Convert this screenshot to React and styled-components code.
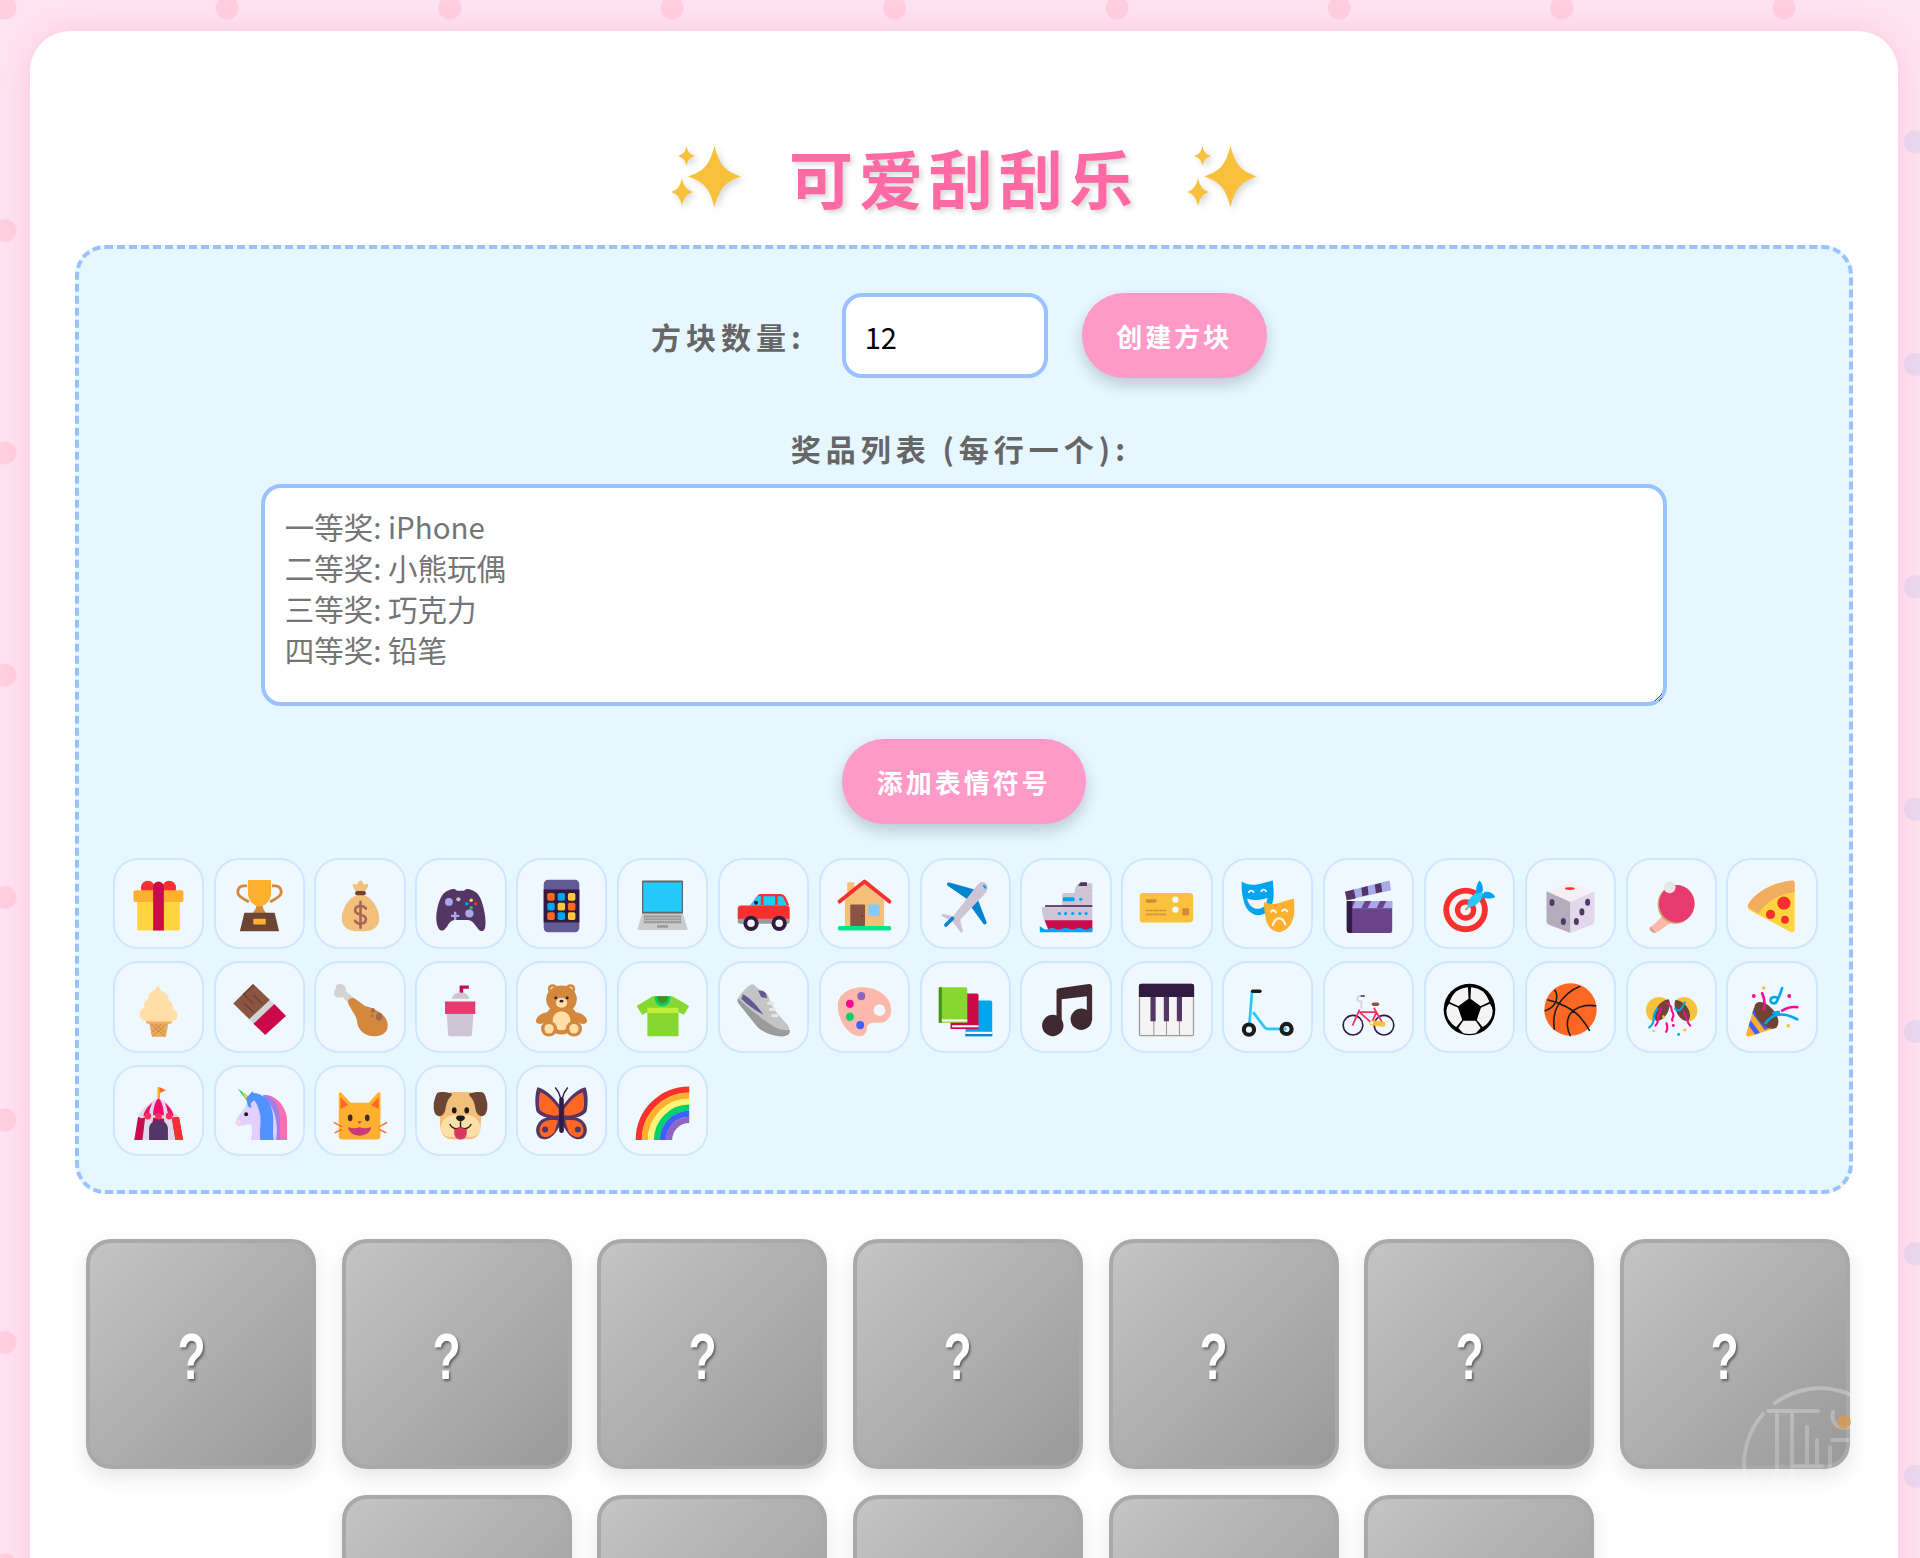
import React from 'react';
import styled, { createGlobalStyle } from 'styled-components';

const FONT = `"Comic Sans MS", cursive, "Noto Sans CJK SC", sans-serif`;

const GlobalStyle = createGlobalStyle`
    html, body {
        margin: 0;
        height: 100%;
        overflow: hidden;
    }
    body {
        padding: 31px 22px 0 30px;
        box-sizing: border-box;
        font-family: ${FONT};
        background-color: #ffe3f0;
        background-image:
            radial-gradient(circle at 25px 28px, #ffcfe0 11px, transparent 12px),
            radial-gradient(circle at 156px 162px, #e8d9f0 11px, transparent 12px);
        background-size: 222.4px 222.4px;
        background-position: -20px -20px;
    }
`;

const Container = styled.main`
    background: #fff;
    border-radius: 40px;
    padding: 107px 45px 40px;
    box-shadow: 0 0 30px rgba(255, 150, 190, 0.35);
`;

const Title = styled.h1`
    display: flex;
    justify-content: center;
    align-items: center;
    gap: 48px;
    margin: 0 0 30px;
    font-size: 64px;
    line-height: 77px;
    font-weight: 700;
    letter-spacing: 6px;
    color: #ff69a4;
    text-shadow: 3px 3px 5px rgba(0, 0, 0, 0.15);
`;

const SparkleSvg = styled.svg`
    width: 70px;
    height: 62px;
    filter: drop-shadow(3px 3px 3px rgba(0, 0, 0, 0.15));
`;

const Panel = styled.section`
    background: #e6f7ff;
    border: 4px dashed #99c2ff;
    border-radius: 30px;
    padding: 44px 31px 34px 33.7px;
`;

const CountRow = styled.div`
    display: flex;
    justify-content: center;
    align-items: center;
    margin-left: -13px;
`;

const Label = styled.label`
    font-size: 30px;
    font-weight: 700;
    letter-spacing: 5px;
    color: #666;
`;

const CountInput = styled.input`
    box-sizing: border-box;
    width: 206px;
    height: 85px;
    margin: 0 34px 0 36px;
    padding: 0 19px;
    border: 4px solid #99c2ff;
    border-radius: 20px;
    background: #fff;
    font-family: ${FONT};
    font-size: 29px;
    color: #000;
    outline: none;
`;

const PinkButton = styled.button`
    height: 85px;
    width: ${props => props.$width}px;
    padding: 0;
    border: none;
    border-radius: 42px;
    background: #ff99c8;
    color: #fff;
    font-family: ${FONT};
    font-size: 26px;
    font-weight: 700;
    letter-spacing: 3px;
    box-shadow: 0 7px 16px rgba(0, 0, 0, 0.18);
`;

const ListLabel = styled(Label)`
    display: block;
    margin: 50px 0 16px -10px;
    line-height: 40px;
    text-align: center;
`;

const PrizeArea = styled.textarea`
    display: block;
    box-sizing: border-box;
    width: 1406px;
    height: 222px;
    margin: 0 0 33px 148px;
    padding: 18px 20px;
    border: 4px solid #99c2ff;
    border-radius: 20px;
    background: #fff;
    font-family: ${FONT};
    font-size: 29.5px;
    line-height: 41px;
    outline: none;
    &::placeholder {
        color: #757575;
        opacity: 1;
    }
`;

const AddRow = styled.div`
    display: flex;
    justify-content: center;
    margin: 0 0 34px -3px;
`;

const EmojiGrid = styled.div`
    display: grid;
    grid-template-columns: repeat(17, 91.3px);
    grid-auto-rows: 91.3px;
    column-gap: 9.57px;
    row-gap: 12.2px;
`;

const EmojiCell = styled.button`
    box-sizing: border-box;
    display: flex;
    align-items: center;
    justify-content: center;
    padding: 4px 0 0;
    background: #f0f8ff;
    border: 2px solid #cfe6ff;
    border-radius: 25px;
`;

const EmojiSvg = styled.svg`
    width: 57px;
    height: 57px;
    flex: none;
`;

const BlockGrid = styled.div`
    display: flex;
    flex-wrap: wrap;
    justify-content: center;
    gap: 25.6px;
    margin: 45px 0 0 8px;
`;

const Block = styled.div`
    box-sizing: border-box;
    width: 230px;
    height: 230px;
    display: flex;
    align-items: center;
    justify-content: center;
    padding: 5px 20px 0 0;
    border: 4px solid #a9a9a9;
    border-radius: 25px;
    background: linear-gradient(135deg, #c4c4c4, #999);
    box-shadow: 0 8px 20px rgba(0, 0, 0, 0.1);
    color: #fff;
    font-family: "Liberation Sans", sans-serif;
    font-size: 64px;
    font-weight: 700;
    text-shadow: 2px 2px 3px rgba(0, 0, 0, 0.45);
`;

const QuestionMark = styled.span`
    display: inline-block;
    transform: scaleX(0.72);
`;

const Watermark = styled.svg`
    position: fixed;
    left: 1740px;
    top: 1378px;
    width: 170px;
    height: 170px;
    pointer-events: none;
`;

const star = (cx, cy, w, h) =>
    `M${cx} ${cy - h}C${cx + w * 0.18} ${cy - h * 0.38} ${cx + w * 0.38} ${cy - h * 0.18} ${cx + w} ${cy}` +
    `C${cx + w * 0.38} ${cy + h * 0.18} ${cx + w * 0.18} ${cy + h * 0.38} ${cx} ${cy + h}` +
    `C${cx - w * 0.18} ${cy + h * 0.38} ${cx - w * 0.38} ${cy + h * 0.18} ${cx - w} ${cy}` +
    `C${cx - w * 0.38} ${cy - h * 0.18} ${cx - w * 0.18} ${cy - h * 0.38} ${cx} ${cy - h}z`;

const Sparkle = () => (
    <SparkleSvg viewBox="0 0 70 62">
        <path fill="#f9c03c" d={star(43.5, 30.5, 26.5, 31)} />
        <path fill="#f9c03c" d={star(15.5, 10, 8.5, 10)} />
        <path fill="#f9c03c" d={star(11, 46, 11, 14)} />
    </SparkleSvg>
);

const appGrid = ['#ff6723', '#00a6ed', '#ffc83d', '#00a6ed', '#ffc83d', '#ff6723', '#ff6723', '#00a6ed', '#ffc83d'];

const ICONS = [
    // gift
    <>
        <circle cx="10" cy="6" r="3.9" fill="#f8312f" />
        <circle cx="22" cy="6" r="3.9" fill="#f8312f" />
        <rect x="4" y="13" width="24" height="17" rx="1" fill="#ffd53f" />
        <rect x="2" y="7.5" width="28" height="6.5" rx="1" fill="#ffb02e" />
        <path d="M13 5.5a3 3 0 0 1 6 0V30h-6z" fill="#ca0b4a" />
    </>,
    // trophy
    <>
        <path d="M9 5H7a3.3 3.3 0 0 0-2 5.8c1.400 1.200 3 2 5 3.200M23 5h2a3.300 3.300 0 0 1 2 5.800c-1.400 1.200-3 2-5 3.200" fill="none" stroke="#d3883e" strokeWidth="1.600" />
        <path d="M14.500 14h3c0 3 1 5.500 3.500 7H11c2.500-1.500 3.500-4 3.500-7z" fill="#d3883e" />
        <path d="M9.500 2.500a.8.8 0 0 1 .8-.8h11.400a.8.8 0 0 1 .8.800V9c0 4-3 7.500-6.500 7.500S9.500 13 9.500 9z" fill="#ffb02e" />
        <path d="M7.500 20h17l2.500 10.500H5z" fill="#6d4534" />
        <rect x="12.500" y="23.500" width="7" height="3.200" rx=".4" fill="#ffb02e" />
    </>,
    // money bag
    <>
        <path d="M16 10c-6 0-10.500 8-10.500 13 0 5.500 3.500 7.500 10.500 7.500s10.500-2 10.500-7.500C26.500 18 22 10 16 10z" fill="#f3c07b" />
        <path d="M13.500 8C12.300 6.800 11.300 5 11.800 3.800c1 0 1.700.6 2.200.6.500-1 1.200-2.400 2-2.400s1.500 1.400 2 2.400c.5 0 1.200-.6 2.200-.6.500 1.200-.5 3-1.700 4.200z" fill="#f3c07b" />
        <rect x="13" y="7.800" width="6" height="2.400" rx="1" fill="#6d4534" />
        <path d="M19 17.800c-.5-1-1.500-1.500-3-1.500-1.900 0-3 1-3 2.400s1.300 2.100 3 2.500 3 1.100 3 2.500-1.100 2.400-3 2.400c-1.500 0-2.500-.5-3-1.500M16 14v14.500" fill="none" stroke="#a56953" strokeWidth="1.500" strokeLinecap="round" />
    </>,
    // game controller
    <>
        <path d="M9.500 7.500c2-1 3.500-1 4.500.2h4c1-1.200 2.500-1.200 4.500-.2 3 1 5 3.500 6.500 10s1.500 12.300-.5 12.800-3-2-5.200-4.500c-1-1-2-1.600-3.300-1.600h-7c-1.300 0-2.300.6-3.300 1.600C8 28.300 7 30.500 5 30S1.500 24 3 17.500 6.500 8.500 9.500 7.500z" fill="#533566" />
        <circle cx="9.500" cy="14" r="2.200" fill="#a8a8ea" />
        <circle cx="21" cy="20.500" r="2.300" fill="#a8a8ea" />
        <circle cx="14.800" cy="12.500" r="1.200" fill="#c4c4c4" />
        <path d="M13 19.500v4.600M10.700 21.800h4.600" stroke="#a8a8ea" strokeWidth="1.300" />
        <circle cx="19.500" cy="15" r="1" fill="#00a6ed" />
        <circle cx="22" cy="13" r="1" fill="#fcd53f" />
        <circle cx="24.500" cy="15" r="1" fill="#f8312f" />
        <circle cx="22" cy="17.300" r="1" fill="#00d26a" />
    </>,
    // mobile phone
    <>
        <rect x="6" y="1.500" width="20" height="29.500" rx="2.500" fill="#635994" />
        <rect x="6" y="7" width="20" height="18.500" fill="#321b41" />
        {appGrid.map((fill, i) => (
            <rect key={i} x={8 + (i % 3) * 5.800} y={9 + Math.floor(i / 3) * 5.400} width="4.200" height="4.400" rx="1" fill={fill} />
        ))}
    </>,
    // laptop
    <>
        <rect x="4.500" y="2" width="23" height="19" rx=".6" fill="#636363" />
        <rect x="5.200" y="3" width="21.600" height="16.500" fill="#26c9fc" />
        <path d="M4.500 20.500h23l2.700 9.300H1.800z" fill="#cccccc" />
        <rect x="5.500" y="21.500" width="21" height="4.500" fill="#9b9b9b" />
        <path d="M6 23h20M6 24.500h20" stroke="#e0e0e0" strokeWidth=".5" strokeDasharray="1 .5" />
        <rect x="13" y="27" width="6" height="1.500" fill="#9b9b9b" />
    </>,
    // car
    <>
        <path d="M8.500 16l4-5.500c.6-.8 1.500-1 2.500-1h10.500c1.500 0 2.700 1 3.300 2.500l1.700 4z" fill="#f8312f" />
        <path d="M8.500 15.800l4.200-5.200h1.800v5.200z" fill="#26c9fc" />
        <rect x="16" y="10.800" width="6.500" height="6" rx=".4" fill="#26c9fc" />
        <path d="M24 10.800h2c1.300 0 2 2.600 3 5.200h-5z" fill="#26c9fc" />
        <circle cx="11.800" cy="14.500" r="1.100" fill="#321b41" />
        <rect x="1.500" y="16" width="29.200" height="9" rx="2" fill="#f8312f" />
        <rect x="1.500" y="23.500" width="29.200" height="2.800" rx="1" fill="#9b9b9b" />
        <circle cx="9" cy="26" r="4.300" fill="#321b41" />
        <circle cx="9" cy="26" r="2.100" fill="#f4f4f4" />
        <circle cx="24.800" cy="26" r="4.300" fill="#321b41" />
        <circle cx="24.800" cy="26" r="2.100" fill="#f4f4f4" />
    </>,
    // house
    <>
        <rect x="6.300" y="3" width="4" height="10" fill="#f3c07b" />
        <path d="M5 13L16 3.500 27 13v15H5z" fill="#f3c07b" />
        <path d="M2 13.800L16 2.500l14 11.300" fill="none" stroke="#f8312f" strokeWidth="2.200" strokeLinecap="round" strokeLinejoin="round" />
        <rect x="8" y="15.500" width="8.300" height="12" rx=".5" fill="#8c5543" />
        <circle cx="14.700" cy="22" r=".4" fill="#321b41" />
        <rect x="18.200" y="15.500" width="6.300" height="6.300" rx=".6" fill="#83cbff" />
        <rect x="1" y="27.500" width="30" height="2.500" rx="1" fill="#00e58f" />
    </>,
    // airplane
    <>
        <path d="M6 4.900c-.9-.8-.2-2.200 1-1.800L21 7l-4 5.500zM22.500 11.500l5.300 13.700c.4 1.100-1.100 2-1.800 1L19 16.500z" fill="#0084ce" />
        <path d="M24 3.200c2.300-1.400 5.400 1.100 4.200 3.900-1 2.200-2.800 4-4.500 5.700L13 24l1.400 6c.3 1.200-1 1.600-1.500.6L9 25.200l-6-3c-1-.5-.5-1.700.5-1.400l5.600 1.200L19.500 8.500c1.400-1.700 2.800-4 4.500-5.300z" fill="#cdc4d6" />
        <path d="M5 27l3.700-3.700" stroke="#0084ce" strokeWidth="2" strokeLinecap="round" />
        <ellipse cx="26.800" cy="5.500" rx=".7" ry="1.300" transform="rotate(-40 26.800 5.500)" fill="#00a6ed" />
    </>,
    // ship
    <>
        <path d="M20.500 9c0-2 1-5.500 3-5.500h7V9z" fill="#cdc4d6" />
        <path d="M23.500 3.300c.5-.4 1-.3 1.500-.3h2.500v2h-4.800z" fill="#533566" />
        <rect x="13.500" y="9" width="17" height="8" rx="1" fill="#cdc4d6" />
        <rect x="14" y="11.300" width="6.500" height="2.300" rx=".5" fill="#00a6ed" />
        <circle cx="24" cy="12.500" r=".9" fill="#00a6ed" />
        <path d="M2 17h28.500v13H6C4 27 2.500 22 2 17z" fill="#cdc4d6" />
        <rect x="4" y="15.800" width="26.500" height="1" fill="#533566" />
        {[12, 15.500, 19.500, 23.500, 27].map(cx => <circle key={cx} cx={cx} cy="20.500" r=".9" fill="#00a6ed" />)}
        <path d="M3.800 24.300h26.700V30H6z" fill="#ca0b4a" />
        <path d="M1 27.500V31h29.500v-2.500c-1.500 0-2 1-3.500 1s-2.500-1-4-1-2 1-3.500 1-2.500-1-4-1-2.500 1-4 1-2-1-3.500-1-2 1-3.500 1c-.8 0-1.500-1-3-1.500z" fill="#00a6ed" />
    </>,
    // ticket
    <>
        <path d="M2.500 9h26.500a2 2 0 0 1 2 2v12.500a2 2 0 0 1-2 2H2.500a1.500 1.500 0 0 1-1.500-1.500V10.500A1.500 1.500 0 0 1 2.500 9z" fill="#f9c23c" />
        <circle cx="21" cy="12.700" r="1.800" fill="#f0f8ff" />
        <circle cx="21" cy="18.300" r="1.800" fill="#f0f8ff" />
        <rect x="4.400" y="12.500" width="6" height="1.900" rx=".6" fill="#d3883e" />
        <path d="M4.400 18.800h11.500M4.400 21h11.500" stroke="#d3883e" strokeWidth=".9" strokeDasharray="1 .3" />
        <rect x="24.900" y="17.500" width="3.800" height="4.100" rx=".5" fill="#d3883e" />
    </>,
    // performing arts
    <>
        <path d="M1.500 2.500c2.500 1.500 5 2.200 8.500 1.700 3-.5 6-1.500 9-2.200.5 5 .8 9.500-.2 12.500-1 4-4 6.800-8 7-4-.3-7-3.500-8-7.500-1-3.500-1.500-7-1.300-11.500z" fill="#00a6ed" />
        <path d="M5.500 8.500c.6-1.200 2-1.200 2.700 0M12.500 8c.7-1.200 2-1.200 2.700 0" fill="none" stroke="#f4f4f4" strokeWidth="1" strokeLinecap="round" />
        <path d="M4.500 12c1 4 3.500 6 6.500 5.800 2.800-.2 4.500-2.300 5-6-3.500 1.200-7.500 1.500-11.500.2z" fill="#f4f4f4" />
        <path d="M14 14c2.500 1.200 6 1.500 8 .8 2.500-.8 5-1.800 8.800-2.600.4 4.500.5 9-.7 12-1.200 3.500-4 6.500-7.500 6.800-3.800-.3-6.500-3-7.500-7-.6-3.200-1-6.500-1.100-10z" fill="#ffb02e" />
        <path d="M18 19.500c.7-1 2-1 2.700.2M24.300 19c.7-1 2-1 2.700.2M19 27c.7-2.500 2.300-3.800 3.500-3.800s2.800 1.200 3.500 3.500" fill="none" stroke="#f4f4f4" strokeWidth="1.200" strokeLinecap="round" />
    </>,
    // clapper board
    <>
        <path d="M3.800 13.500h25.500V30a1.500 1.500 0 0 1-1.500 1.500H5.500a1.700 1.700 0 0 1-1.700-1.700z" fill="#6b438b" />
        <path d="M3.800 13.500h3v18H5.500a1.700 1.700 0 0 1-1.700-1.700z" fill="#321b41" />
        <path d="M8.500 13.500h20.800V17.500H6.800z" fill="#a8a8ea" />
        <path d="M12 17.500l2-4h3.500l-2 4zM20.500 17.500l2-4H26l-2 4z" fill="#6b438b" />
        <path d="M2.800 8.300L27.800 2l.9 5.500L3.800 13z" fill="#a8a8ea" />
        <path d="M2.800 8.300l5-1.300 1 5-5 1zM12 6l3.500-.9L16 10l-3.500.8zM19.500 4.200l3.500-.9.7 5-3.500.8z" fill="#533566" />
    </>,
    // direct hit
    <>
        <circle cx="13.800" cy="18.500" r="12.500" fill="#f8312f" />
        <circle cx="13.800" cy="18.500" r="9.200" fill="#f4f4f4" />
        <circle cx="13.800" cy="18.500" r="6" fill="#f8312f" />
        <circle cx="13.800" cy="18.500" r="3" fill="#f4f4f4" />
        <path d="M13.800 18.500l3-3" stroke="#9b9b9b" strokeWidth="1" />
        <path d="M15 16.500c-.5-2 .5-4 2.500-6l4-3.500 3 3-3 4c-2 2-4.500 3.200-6.500 2.500z" fill="#26c9fc" />
        <path d="M20 9.500c-.7-2.500-.2-5 1.500-7.500 1.800 1.500 2.200 4 2 6zM22.500 11.500c2.500.7 5.500.8 8-.2-1-2.300-3.500-3.300-6-3z" fill="#00a6ed" />
    </>,
    // game die
    <>
        <path d="M16 3l13.500 5L16 14 2.500 8z" fill="#f4f0f4" />
        <ellipse cx="15.600" cy="6.500" rx="2.800" ry=".8" fill="#f8312f" />
        <path d="M2.500 8L16 14v17.500L4.200 27c-1-.4-1.700-1.200-1.700-2.500z" fill="#b4acbc" />
        <path d="M29.500 8L16 14v17.500L27.800 27c1-.4 1.700-1.200 1.700-2.500z" fill="#e1d8ec" />
        <ellipse cx="5.600" cy="14.300" rx="1.400" ry="2" fill="#533566" />
        <ellipse cx="12" cy="25" rx="1.400" ry="2" fill="#533566" />
        <ellipse cx="25.600" cy="14.200" rx="1.400" ry="2" fill="#533566" />
        <ellipse cx="22.400" cy="19.600" rx="1.400" ry="2" fill="#533566" />
        <ellipse cx="19.300" cy="25" rx="1.400" ry="2" fill="#533566" />
    </>,
    // ping pong
    <>
        <path d="M12 21l4.500 4-8.500 6-3.500-3z" fill="#fbb8ab" />
        <path d="M4.200 27.600l3.400 3.400c-.8.600-1.700.5-2.500 0-.8-.6-1.300-1.300-1.500-1.900z" fill="#e39d89" />
        <ellipse cx="18.200" cy="15.500" rx="10" ry="10.800" fill="#d3a06a" />
        <ellipse cx="19" cy="15" rx="10" ry="10.500" fill="#e73b6f" />
        <circle cx="15" cy="5.800" r="3.300" fill="#e6e6e6" />
    </>,
    // pizza
    <>
        <path d="M27 2c1 0 1.500 1 1.500 2v25.500c0 1.300-1.500 2-2.500 1.200L3 18.500c-1-.5-1-2-.5-3C7 8 17 3 27 2z" fill="#ffd53f" />
        <path d="M27 2c1 0 1.500 1 1.500 2v4.500C20 9.500 13 13.500 8 20.500L3 17.500c-1-.5-1-1.600-.5-2.500C7 8 17 3 27 2z" fill="#f3ad61" />
        <circle cx="22.400" cy="14.700" r="3.700" fill="#f8312f" />
        <circle cx="14.900" cy="21" r="2.600" fill="#f8312f" />
        <circle cx="23" cy="24" r="2.200" fill="#f8312f" />
    </>,
    // ice cream
    <>
        <path d="M10.700 23h11l-1.600 8.300h-7.800z" fill="#e9a95e" />
        <path d="M11.500 24l8 7M20.500 24l-8 7M14 24l6 5M18 24l-6 5" stroke="#c9853c" strokeWidth=".5" />
        <rect x="9" y="21" width="14.500" height="3" rx="1" fill="#f3ad61" />
        <path d="M16 2.500c.8 1.500.7 2.800 3 3.800 2 1 3 2.800 2.500 4.400 2 1 3.200 3 2.600 5 2 1 3.200 2.800 2.400 5-.7 1.700-3 2.300-5 2H10c-2 0-4-1-4.500-3s.5-4 2.500-5c-.5-2 .5-4 2.500-5-.5-2 1-4 3-4.500 1-.5 1-1.700 2.500-2.700z" fill="#ffdea7" />
    </>,
    // chocolate
    <>
        <path d="M12.400 1.600l9.500 9-11.600 10.900L1.300 12.600z" fill="#8c5543" />
        <path d="M12.300 7.700l5.500 5.200M7 12.300l5.700 5.300M7.300 7.700l5.300 5M12.500 2.500L6.800 7.800" stroke="#6d4534" strokeWidth=".8" fill="none" />
        <path d="M21.900 10.600l2.400 2.300L12.600 24l-2.300-2.500z" fill="#d3d3d3" />
        <path d="M24.300 12.900l6.600 6.700-11.700 10.700-6.600-6.300z" fill="#ca0b4a" />
    </>,
    // poultry leg
    <>
        <path d="M3.500 1.800c2-.5 4 .5 4.300 2.500.2 1 0 1.500.5 2L13 10l-3 3.500-3.500-4c-.8-.5-1.500-.3-2.500-.2C2 9.500.8 8 1.200 6c.2-1 .6-1.500 1-2-.2-1 .3-2 1.300-2.200z" fill="#d3d3d3" />
        <path d="M9.100 11c.5-1.500 2.500-2 3.900-1l5.500 4c6 1.500 12.800 5 12.800 11 0 4-3.300 6-7.300 6-5.500 0-9.500-3-10-8.500-.3-3-2.500-5-4-8-.7-1.200-1.200-2.400-.9-3.500z" fill="#d3883e" />
        <ellipse cx="23" cy="16.500" rx="1" ry="1.400" fill="#a56953" />
        <ellipse cx="26.500" cy="20" rx="1.800" ry="2.200" fill="#a56953" />
        <circle cx="22.500" cy="19.500" r=".7" fill="#a56953" />
    </>,
    // cup with straw
    <>
        <path d="M15.500 7V2.500h5.200v1.800h-3.200V7z" fill="#ca0b4a" />
        <path d="M11 10.500c0-2 2-4 5-4s5 2 5 4z" fill="#cdc4d6" />
        <rect x="7.300" y="10" width="17" height="2.200" rx=".5" fill="#f4f4f4" />
        <rect x="7.300" y="11.500" width="17" height="7" fill="#e73b6f" />
        <path d="M8.300 18.500h15L22.400 30c0 .6-.5 1-1 1H10a1 1 0 0 1-1-1z" fill="#cdc4d6" />
    </>,
    // teddy bear
    <>
        <circle cx="11" cy="4.500" r="2.700" fill="#d3883e" />
        <circle cx="21" cy="4.500" r="2.700" fill="#d3883e" />
        <circle cx="11" cy="4.500" r="1.300" fill="#ffdea7" />
        <circle cx="21" cy="4.500" r="1.300" fill="#ffdea7" />
        <ellipse cx="16" cy="21.500" rx="9" ry="8.500" fill="#d3883e" />
        <ellipse cx="6" cy="20.800" rx="4.800" ry="2.600" transform="rotate(-30 6 20.800)" fill="#d3883e" />
        <ellipse cx="26" cy="20.800" rx="4.800" ry="2.600" transform="rotate(30 26 20.800)" fill="#d3883e" />
        <ellipse cx="16" cy="10.300" rx="8.600" ry="7.800" fill="#d3883e" />
        <ellipse cx="16" cy="22.300" rx="5" ry="5.300" fill="#ffdea7" />
        <ellipse cx="9" cy="26.800" rx="4.500" ry="4.300" fill="#d3883e" />
        <ellipse cx="23" cy="26.800" rx="4.500" ry="4.300" fill="#d3883e" />
        <ellipse cx="9" cy="26.800" rx="2.600" ry="2.700" fill="#ffdea7" />
        <ellipse cx="23" cy="26.800" rx="2.600" ry="2.700" fill="#ffdea7" />
        <ellipse cx="16" cy="12.200" rx="3.200" ry="2.800" fill="#ffdea7" />
        <circle cx="12.800" cy="9.500" r=".8" fill="#321b41" />
        <circle cx="19.200" cy="9.500" r=".8" fill="#321b41" />
        <ellipse cx="16" cy="11.300" rx="1.100" ry=".8" fill="#321b41" />
    </>,
    // t-shirt
    <>
        <path d="M10.500 8.500h11l9.500 5.500-3 5-3-1.500V31H7.500V17.500L4.500 19l-3-5z" fill="#86d72f" />
        <rect x="7.500" y="15" width="17.400" height="3" fill="#c3ef3c" />
        <path d="M11.500 8.500c0 3.500 2 5.700 4.500 5.700s4.500-2.200 4.500-5.700z" fill="#00d26a" />
        <path d="M13 8.500c0 2.500 1.300 4 3 4s3-1.500 3-4z" fill="#44911b" />
    </>,
    // sneaker
    <>
        <path d="M1.800 9.500c-.8 1-.6 2 0 2.800l9.500 12c3 4 8.500 6.500 14.500 6.800 3 .2 5.500-1.200 5-3.400z" fill="#9b9b9b" />
        <path d="M9 2c1-.5 2 0 2.500 1l3 2.500c1 .5 2 1 3.500 1.500 1 2 1.500 4 3 7 1 2 4 6 8 10 1 1 1.500 2.300 1.400 3.500-3 .5-7-.5-11-3.500C14 20.500 6 14 1.800 10c.7-2 3.700-6 7.200-8z" fill="#c4c4c4" />
        <path d="M4.500 7.500c3 1.500 7 5 11.500 11.500-4-2-8.500-5-12.500-9z" fill="#635994" />
        <path d="M13 5.500c1.500-.5 3.200 0 4.200 1.200l.8 3-3.300-.7z" fill="#635994" />
        <rect x="18" y="11.500" width="4" height="1.900" rx=".9" fill="#e6e6e6" />
        <rect x="19" y="15" width="4" height="1.900" rx=".9" fill="#e6e6e6" />
        <rect x="20.300" y="18.500" width="4" height="1.900" rx=".9" fill="#e6e6e6" />
    </>,
    // palette
    <>
        <path d="M15 3.500c8 0 16 5 16 13 0 4-3 7-6 7-3 0-5-.5-7 1-1 1-.5 2.500-1 4s-2 2.500-3.500 2.500C7 31 1 22 1 14 1 7 8 3.500 15 3.500z" fill="#fbb8ab" />
        <circle cx="24.400" cy="16.400" r="3.300" fill="#f0f8ff" />
        <ellipse cx="14.200" cy="8.500" rx="2.200" ry="2.300" fill="#8d65c5" />
        <ellipse cx="7.800" cy="12.800" rx="2.200" ry="2.300" fill="#f70a8d" />
        <ellipse cx="7.800" cy="20.100" rx="2.200" ry="2.300" fill="#00d26a" />
        <ellipse cx="13.600" cy="24.800" rx="2.200" ry="2.300" fill="#3f5fff" />
    </>,
    // books
    <>
        <path d="M16 12a1 1 0 0 1 1-1h13a1 1 0 0 1 1 1v19H16z" fill="#00a6ed" />
        <rect x="16" y="28.500" width="15" height="1.300" fill="#f4f4f4" />
        <rect x="16" y="29.800" width="15" height="1.200" fill="#0084ce" />
        <path d="M7.600 8a1 1 0 0 1 1-1h13.700a1 1 0 0 1 1 1v19H7.600z" fill="#ca0b4a" />
        <rect x="8.500" y="24.800" width="14.800" height="1.200" fill="#f4f4f4" />
        <path d="M1 4.500a1 1 0 0 1 1-1h14a1 1 0 0 1 1 1v19H1z" fill="#86d72f" />
        <rect x="1" y="3.500" width="1.700" height="20" fill="#44911b" />
        <rect x="2.700" y="21.500" width="14.300" height="1.300" fill="#f4f4f4" />
    </>,
    // music notes
    <>
        <path d="M10.400 5.500c0-.8.600-1.400 1.400-1.500L28.500 1.700c1-.1 1.900.6 1.900 1.600V22h-3V8.500L13.300 10.300V25h-2.900z" fill="#402a32" />
        <circle cx="8.300" cy="25" r="6" fill="#402a32" />
        <circle cx="24.300" cy="21.500" r="6" fill="#402a32" />
    </>,
    // piano
    <>
        <path d="M.5 3a1.400 1.400 0 0 1 1.400-1.400h28.200A1.400 1.400 0 0 1 31.500 3v27a1 1 0 0 1-1 1h-29a1 1 0 0 1-1-1z" fill="#9b9b9b" />
        <rect x="1.200" y="8.900" width="29.600" height="21.400" fill="#f4f4f4" />
        <path d="M.5 3a1.400 1.400 0 0 1 1.400-1.400h28.200A1.400 1.400 0 0 1 31.500 3v6H.5z" fill="#321b41" />
        <path d="M8.900 20v10.500M16 20v10.500M23.300 20v10.500" stroke="#9b9b9b" strokeWidth=".6" />
        <rect x="7" y="8.900" width="2.900" height="13.700" fill="#533566" />
        <rect x="14.500" y="8.900" width="2.900" height="13.700" fill="#533566" />
        <rect x="21.800" y="8.900" width="2.900" height="13.700" fill="#533566" />
    </>,
    // scooter
    <>
        <path d="M7.300 6l-1.700 21M7.900 17.500l6.500 8.500c.6.700 1.200.9 2 .9h10" fill="none" stroke="#26c9fc" strokeWidth="1.500" />
        <rect x="6.700" y="4.800" width="6" height="1.900" rx=".9" fill="#1c1c1c" />
        <circle cx="5.600" cy="27.300" r="4" fill="#1c1c1c" />
        <circle cx="5.600" cy="27.300" r="1.700" fill="#f0f8ff" />
        <circle cx="26.700" cy="26.900" r="4" fill="#1c1c1c" />
        <circle cx="26.700" cy="26.900" r="1.700" fill="#f0f8ff" />
        <circle cx="26" cy="26.900" r=".9" fill="#26c9fc" />
    </>,
    // bicycle
    <>
        <circle cx="7.300" cy="24.800" r="5.500" fill="none" stroke="#321b41" strokeWidth=".9" />
        <circle cx="24.700" cy="24.800" r="5.500" fill="none" stroke="#321b41" strokeWidth=".9" />
        <path d="M7 25l4-9M11 17.500l6.700 6M19 15l5.700 10M11 17.500h9.500M20.500 17.500l-2.800 6" fill="none" stroke="#f92f60" strokeWidth="1" />
        <path d="M13 8.500h-2.300c-1.200 0-1.200 3 0 3H12v4" fill="none" stroke="#d3d3d3" strokeWidth="1" />
        <rect x="11.500" y="7.900" width="2.500" height="1.100" rx=".5" fill="#635994" />
        <rect x="17.800" y="12" width="4.200" height="2" rx="1" fill="#8c5543" />
        <rect x="16.500" y="22.500" width="9" height="2.800" rx="1.400" transform="rotate(8 21 24)" fill="#f9c23c" />
        <circle cx="17.800" cy="23.500" r=".9" fill="#f4f4f4" />
    </>,
    // soccer ball
    <>
        <circle cx="16" cy="16" r="14.500" fill="#000" />
        <g fill="#f4f4f4" stroke="#f4f4f4" strokeWidth=".9" strokeLinejoin="round">
            <path d="M14.700 3.900L15 9.800l-5.200 3.800-4.400-2.100c.8-2.400 2-4 3.300-5.300 1.800-1.300 3.600-2 6-2.300z" />
            <path d="M17.300 3.900L17 9.800l5.200 3.800 4.400-2.100c-.8-2.400-2-4-3.300-5.300-1.800-1.300-3.600-2-6-2.300z" />
            <path d="M4.700 13.300l4.500 2 2.200 6.400-2.900 3.600C5.500 23.500 3.300 20 3.500 16.500c0-1.200.5-2.300 1.200-3.200z" />
            <path d="M27.300 13.300l-4.500 2-2.200 6.400 2.900 3.600c3-1.800 5.200-5.300 5-8.800 0-1.200-.5-2.300-1.200-3.200z" />
            <path d="M12.800 22.700h6.400l2.500 3.600-2.400 2.600c-2 .5-4.600.5-6.600 0l-2.400-2.600z" />
        </g>
    </>,
    // basketball
    <>
        <circle cx="16" cy="16" r="14.700" fill="#ff6723" />
        <path d="M7 5c2 2 1.500 6 0 8-1.300 2-3.500 3.200-5.500 3.800M3 10.500c7 1.500 15 5.500 19 10.500 3 3.500 4.500 6.500 4.800 7M21.500 3C15 5.500 9.500 11 7.500 17c-1 3.300-1 7.500-.5 10.500M30.500 14c-6-1-12 .5-15 5-2 3.500-1.500 8.500.5 12" fill="none" stroke="#1c1c1c" strokeWidth=".9" />
    </>,
    // confetti ball
    <>
        <path d="M13.500 10.500C11 8.200 6.500 8.500 3.500 11.500c-2.500 2.700-2.500 7 0 9.800 1 1 2.500 1.500 3.500 1z" fill="#f9c23c" />
        <path d="M28.500 11.500c2.700 2.800 2.700 7 .2 9.800-1 1-2.500 1.500-3.500 1l-6.300-11.800c2.500-2.300 6.600-2 9.600 1z" fill="#f9c23c" />
        <path d="M14.500 10.200c-3.500.5-6 3-7.500 6.200-1 2.500-.8 4.700.5 6 3 .2 5.500-2.500 6.700-5.500 1-2.500 1.300-4.800.3-6.700z" fill="#6d4534" />
        <path d="M18.300 10.500c3.300.5 6 2.500 7.500 6 1 2.700.6 4.800-.5 6-3 .2-5.500-2.500-6.700-5.500-1-2.500-1.300-4.700-.3-6.500z" fill="#6d4534" />
        <path d="M7 25c1.500-1.500 1.500-3 1.500-5s2-3 1.500-5M13 12.500c1.500.2 3 1.500 3 3.300s1.500 2 1 4-1 1.200-.5 2.500M13 28.500c.8-1 .7-3 .2-4.700" fill="none" stroke="#f70a8d" strokeWidth="1.200" strokeLinecap="round" />
        <path d="M3.500 26c1.500-1 2.500-3 2.500-5s.800-4 2-5.500M18 15.500c1 1.500 2.500 1.300 3.500 0 .7-1.200 1.500-2.500 2-3.500" fill="none" stroke="#00a6ed" strokeWidth="1.200" strokeLinecap="round" />
        <path d="M26.500 25c-1.300-1-1.500-2.500-2-4s-1.500-2.500-1.500-4" fill="none" stroke="#f70a8d" strokeWidth="1.200" strokeLinecap="round" />
        <circle cx="11.500" cy="20" r=".8" fill="#f9c23c" />
        <circle cx="6" cy="28" r=".7" fill="#f9c23c" />
        <circle cx="20" cy="30" r=".8" fill="#00a6ed" />
        <circle cx="17" cy="25" r=".8" fill="#f70a8d" />
        <circle cx="23.500" cy="27.500" r=".9" fill="#f9c23c" />
    </>,
    // party popper
    <>
        <path d="M5.500 15L1.300 29.500c-.4 1.200.6 2 1.700 1.600L19 26z" fill="#ffb02e" />
        <path d="M4.600 18l7 9.500 3-1.200-8.800-11.500zM2.600 25l3.700 5 2.600-1-5.200-7z" fill="#3f5fff" />
        <ellipse cx="12.500" cy="19.300" rx="5" ry="8.800" transform="rotate(-40 12.500 19.300)" fill="#6d4534" />
        <path d="M12 23.700c2-2.500 4-4.500 7-4.800 4-.4 7.500.6 10.900 2.600M16.500 18c1-.3 2-.5 3-.5" fill="none" stroke="#00a6ed" strokeWidth="1.500" strokeLinecap="round" />
        <path d="M21.400 16.600c2.500-1.600 5.500-2.300 8.500-1.900M10.200 6.900c1.400 3 1.700 6 .9 9.300" fill="none" stroke="#f70a8d" strokeWidth="1.500" strokeLinecap="round" />
        <path d="M21.400 4c-.7 2.500-1.700 5-3 7.500-.9 1.600-3.300 1.200-3.500-.5-.2-1.600 1.800-2.500 3.500-1.700" fill="none" stroke="#00a6ed" strokeWidth="1.500" strokeLinecap="round" />
        <circle cx="5.500" cy="8.400" r="1.100" fill="#f70a8d" />
        <circle cx="25.400" cy="8.400" r="1.100" fill="#f70a8d" />
        <circle cx="11.100" cy="3.900" r="1" fill="#f9c23c" />
        <circle cx="24.800" cy="25.200" r="1" fill="#f9c23c" />
    </>,
    // circus tent
    <>
        <path d="M15.700 2v7.500h1V5l3.500-1.500-3.500-1.700z" fill="#ff6723" />
        <rect x="15.400" y="2" width="1.200" height="8" fill="#ffb02e" />
        <path d="M16 8l-11 10-2.600 13.400H29.800L27 18z" fill="#e1d8ec" />
        <path d="M4.500 18.500L2.400 31.400H7L8.500 19zM13 19l-1.500 12.400h9L19 19zM23.500 19l2 12.400h4.300L27.500 18.500z" fill="#ca0b4a" />
        <path d="M23.500 19l2 12.400h4.300L27.500 18.500z" fill="#f8312f" />
        <path d="M16 8c-4 1-9 6-11.500 10 1 1.500 2.800 1.500 3.800.3 1 1.500 3.500 1.500 4.500 0 .8.800 2.500.800 3.200 0 1 1.500 3.500 1.500 4.500 0 1 1.200 3 1.200 4-.3C25 14 20 9 16 8z" fill="#e1d8ec" />
        <path d="M16 8c-1.500 1-3 5-3 9.500h6C19 13 17.500 9 16 8zM12.500 10.500c-2.500 2-4.500 4.500-5 7.500h3c.3-2.800 1-5.300 2-7.500zM19.500 10.500c2.500 2 4.500 4.500 5 7.500h-3c-.3-2.800-1-5.300-2-7.500z" fill="#f70a6a" />
        <circle cx="10" cy="18" r="1.900" fill="#f92f60" />
        <circle cx="16" cy="18" r="1.900" fill="#f92f60" />
        <circle cx="22" cy="18" r="1.900" fill="#f92f60" />
        <path d="M10.700 31.400v-6c0-3 2.300-5 5.300-5s5.300 2 5.300 5v6z" fill="#533566" />
    </>,
    // unicorn
    <>
        <path d="M20 6c6.500 1 11.500 8 11.500 15v10.400H22z" fill="#f970b0" />
        <path d="M18 6c6 .5 9.500 7 9.500 15v10.400H20z" fill="#a17fea" />
        <path d="M14 7l-3.500 2c-2 3-4 6-6 8.500-1.500 2-2.300 3.500-1.800 5 .5 1 2 1 3 1 2.500-.5 4-1 5.500-.5 1 2 .500 5 0 8.400h14c1-4 1-13-3-19.500C20 9 17 7.500 14 7z" fill="#e1d0ff" />
        <path d="M13 5c5 .5 9.500 4 10.500 12 .7 5-.5 10 .5 14.400h-7.500c-1-5.500 1-10-.5-15.500C15.300 12 13.500 9 12 8.500z" fill="#5092ff" />
        <path d="M3.600 2.400l7.300 5.600-1.700 1.800z" fill="#00d26a" />
        <path d="M6 4.500l4.900 3.500-1.700 1.800z" fill="#ffc83d" />
        <path d="M8.500 8l3.500-4 2.500 3.500-3.500 3.500 .5 2.500-2-1z" fill="#5092ff" />
        <circle cx="8.500" cy="17" r="1.100" fill="#1c1c1c" />
        <path d="M3.300 19.500c-.8 1-.8 2.500 0 3 1 .3 2 .2 3-.2-.5-1-1.500-2.300-3-2.800z" fill="#f9d4f0" />
    </>,
    // cat
    <>
        <path d="M3.800 5.500c0-1 1-1.200 1.600-.5l5 5.500h10.200l5-5.500c.6-.7 1.600-.5 1.600.5v24c0 1-.8 1.700-1.800 1.700H5.600c-1 0-1.800-.7-1.800-1.700z" fill="#ffb02e" />
        <path d="M4.800 7.500L9 11.800 4.800 14zM26.200 7.500L22 11.800l4.200 2.200z" fill="#ff6723" />
        <ellipse cx="10.200" cy="19" rx="1.300" ry="1.900" fill="#402a32" />
        <ellipse cx="19.800" cy="19" rx="1.300" ry="1.900" fill="#402a32" />
        <path d="M14.300 21h2.400l-1.200 1.300z" fill="#f70a8d" />
        <path d="M9 24.200c1.500.8 4.500.8 6.500.1 2 .7 5 .7 6.500-.1-.3 3-3 4.800-6.500 4.800S9.300 27.200 9 24.200z" fill="#ca3b7a" />
        <path d="M1 21.500l4.500 2.500M1.500 27.500l4-2M31 21.500l-4.500 2.500M30.500 27.500l-4-2" stroke="#ff6723" strokeWidth=".8" />
    </>,
    // dog
    <>
        <path d="M7 8c0-2.500 3-3.500 6-3.500h6c3 0 6 1 6 3.500 3 7 3 12 2 18-.5 3-3 5-6 5H11c-3 0-5.500-2-6-5-1-6-1-11 2-18z" fill="#f3c07b" />
        <path d="M11 17.500c-4 1-6.500 4-6 8.500.5 2.500 2.500 3.700 6 3.700h10c3.500 0 5.500-1.200 6-3.700.5-4.500-2-7.500-6-8.500z" fill="#ffdea7" />
        <path d="M3 5c1.500-1 5-.500 7 0 1 0 1.500.5 1 1.500-2.500 2.500-3 5-3.500 8-.5 2.500-2.500 4-4 3.500-2.500-1-2.700-4-2.500-7.500C1.700 8 2 6 3 5zM29 5c-1.500-1-5-.5-7 0-1 0-1.500.5-1 1.500 2.500 2.500 3 5 3.500 8 .5 2.500 2.500 4 4 3.500 2.500-1 2.700-4 2.500-7.500C30.300 8 30 6 29 5z" fill="#6d4534" />
        <ellipse cx="12.500" cy="14.800" rx="1.300" ry="1.800" fill="#1c1c1c" />
        <ellipse cx="19.500" cy="14.800" rx="1.300" ry="1.800" fill="#1c1c1c" />
        <path d="M13.500 19c0-1 1-1.300 2.500-1.300s2.500.3 2.500 1.300-1.500 2-2.500 2-2.500-1-2.500-2z" fill="#1c1c1c" />
        <path d="M16 21v3.500M10 22.500c1 2.500 3.500 3 6 2 2.500 1 5 .5 6-2" fill="none" stroke="#1c1c1c" strokeWidth=".8" />
        <path d="M12.500 25c1 .3 2.500 0 3.500-.8 1 .8 2.500 1.100 3.500.8v2.500c0 2-1.500 3.700-3.500 3.700s-3.500-1.700-3.500-3.700z" fill="#d8385e" />
    </>,
    // butterfly
    <>
        <path d="M2.500 1.800c4 1 8 4 13 10.800v6C11 20.500 4 18.500 2 15.500c-.8-3-1.200-9.500.5-13.700zM29.500 1.800c-4 1-8 4-13 10.800v6c4.500 1.900 11.500-.1 13.500-3.100.8-3 1.200-9.500-.5-13.700z" fill="#533566" />
        <path d="M4 4.500c3.500 1.500 7 4.500 10.500 9.500v3.500C10.500 18.500 5.500 16.500 3.800 14.500c-.8-3-.5-7 .2-10zM28 4.500c-3.500 1.500-7 4.500-10.500 9.500v3.500c4 1 9-1 10.700-3 .8-3 .5-7-.2-10z" fill="#ff6723" />
        <path d="M15.500 19c-4.500-1-9.500-1-12.500 3-2 3-1.500 6.500 1 8.500 3.500 1.500 6.500-.5 8.500-3l3-4.500zM16.500 19c4.500-1 9.500-1 12.500 3 2 3 1.500 6.500-1 8.500-3.500 1.500-6.500-.5-8.500-3l-3-4.500z" fill="#533566" />
        <path d="M14 20.500c-3.500-.5-7.500-.5-9.500 2.500-1.500 2.500-1 5 1 6.500 2.500 1 5-.5 6.500-2.500zM18 20.500c3.500-.5 7.500-.5 9.500 2.500 1.500 2.500 1 5-1 6.500-2.500 1-5-.5-6.500-2.500z" fill="#ff6723" />
        <circle cx="6.800" cy="25.500" r="1.700" fill="#533566" />
        <circle cx="25.200" cy="25.500" r="1.700" fill="#533566" />
        <rect x="14.700" y="7.500" width="2.600" height="20" rx="1.300" fill="#321b41" />
        <path d="M15.500 8C15 5.500 13.800 3.500 12.500 2M16.500 8c.5-2.500 1.700-4.500 3-6" fill="none" stroke="#321b41" strokeWidth=".8" />
    </>,
    // rainbow
    <>
        {['#f8312f', '#ffb02e', '#fff478', '#00d26a', '#3f5fff', '#8d65c5'].map((color, i) => {
            const r = 28.300 - i * 3.400;
            return <path key={color} d={`M${31 - r} 31.400A${r} ${r} 0 0 1 31 ${31.400 - r}`} fill="none" stroke={color} strokeWidth="3.500" />;
        })}
    </>,
];

const App = () => (
    <>
        <GlobalStyle />
        <Container>
            <Title>
                <Sparkle />
                <span>可爱刮刮乐</span>
                <Sparkle />
            </Title>
            <Panel>
                <CountRow>
                    <Label htmlFor="count">方块数量:</Label>
                    <CountInput id="count" type="number" defaultValue={12} />
                    <PinkButton $width={185}>创建方块</PinkButton>
                </CountRow>
                <ListLabel htmlFor="prizes">奖品列表 (每行一个):</ListLabel>
                <PrizeArea id="prizes" placeholder={'一等奖: iPhone\n二等奖: 小熊玩偶\n三等奖: 巧克力\n四等奖: 铅笔'} />
                <AddRow>
                    <PinkButton $width={244}>添加表情符号</PinkButton>
                </AddRow>
                <EmojiGrid>
                    {ICONS.map((icon, i) => (
                        <EmojiCell key={i}>
                            <EmojiSvg viewBox="0 0 32 32">{icon}</EmojiSvg>
                        </EmojiCell>
                    ))}
                </EmojiGrid>
            </Panel>
            <BlockGrid>
                {Array.from({ length: 12 }, (_, i) => (
                    <Block key={i}><QuestionMark>?</QuestionMark></Block>
                ))}
            </BlockGrid>
        </Container>
        <Watermark viewBox="0 0 170 170">
            <defs>
                <linearGradient id="fade" gradientUnits="userSpaceOnUse" x1="0" y1="0" x2="0" y2="170">
                    <stop offset="0" stopColor="#fff" stopOpacity="0.3" />
                    <stop offset="0.55" stopColor="#fff" stopOpacity="0.2" />
                    <stop offset="1" stopColor="#eee" stopOpacity="0.08" />
                </linearGradient>
            </defs>
            <g fill="none" stroke="url(#fade)" strokeWidth="4" strokeLinecap="round">
                <path d="M35 25A76 76 0 1 1 23 36" />
                <path d="M28 33h50M37 37v51c0 10-6 20-17 27M52 35v97M67 49v39M77 62v26M52 88h30M90 69v40" />
                <path d="M93 34a11 11 0 0 0 22 8M92 62h16" />
            </g>
            <circle cx="104" cy="44" r="7" fill="#d99a4e" opacity="0.75" />
        </Watermark>
    </>
);

export default App;
